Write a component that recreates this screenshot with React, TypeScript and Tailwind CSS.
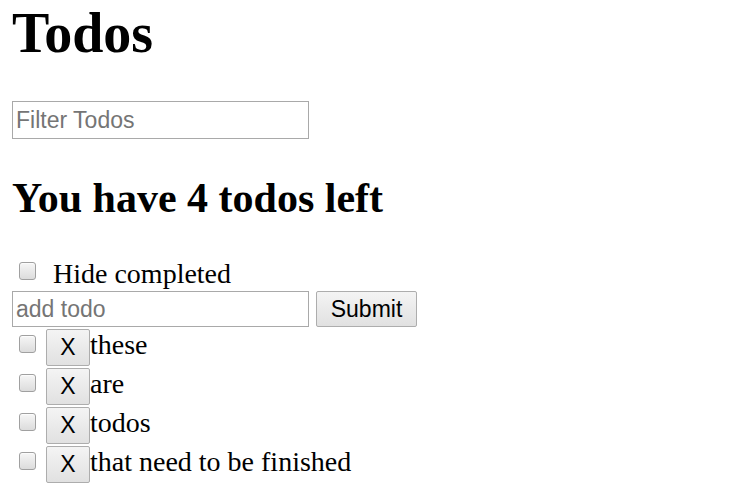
import { useState } from 'react';

type Todo = { id: number; text: string; done: boolean };

const serif = "font-['Liberation_Serif','Times_New_Roman',serif]";
const sans = "font-['Liberation_Sans',Arial,sans-serif]";

const checkboxCls =
    'appearance-none w-[17px] h-[18px] rounded-[3px] border border-[#a0a0a0] bg-gradient-to-b from-[#f6f6f6] to-[#dcdcdc] shadow-[inset_0_1px_1px_rgba(255,255,255,0.8)] m-0 shrink-0';

const buttonCls =
    `${sans} text-[23px] text-black border border-[#adadad] rounded-[2px] bg-gradient-to-b from-[#f4f4f4] to-[#e1e1e1] leading-none flex items-center justify-center`;

const inputCls =
    `${sans} text-[23px] text-black w-[297px] border border-[#a9a9a9] px-[3px] placeholder:text-[#757575] outline-none`;

const App = () => {
    const [todos, setTodos] = useState<Todo[]>([
        { id: 1, text: 'these', done: false },
        { id: 2, text: 'are', done: false },
        { id: 3, text: 'todos', done: false },
        { id: 4, text: 'that need to be finished', done: false },
    ]);
    const [hideCompleted, setHideCompleted] = useState(false);

    const left = todos.filter(t => !t.done).length;

    return (
        <div className={`min-h-screen bg-white text-black pl-[12px] ${serif}`}>
            {/* Title */}
            <h1 className="text-[56px] font-bold leading-[62px] pt-[2px]">Todos</h1>

            <input className={`${inputCls} h-[38px] mt-[37px] block`} placeholder="Filter Todos" />

            <h2 className="text-[42px] font-bold leading-[46px] mt-[36px]">
                You have {left} todos left
            </h2>

            {/* Hide completed */}
            <label className="flex items-start h-[31px] mt-[37px] text-[28px] leading-[31px]">
                <input
                    type="checkbox"
                    checked={hideCompleted}
                    onChange={() => setHideCompleted(!hideCompleted)}
                    className={`${checkboxCls} ml-[7px] mt-[4px]`}
                />
                <span className="ml-[17px]">Hide completed</span>
            </label>

            {/* Add todo */}
            <form className="flex items-start mt-[2px]" onSubmit={e => e.preventDefault()}>
                <input className={`${inputCls} h-[36px]`} placeholder="add todo" />
                <button type="submit" className={`${buttonCls} w-[101px] h-[36px] ml-[7px]`}>
                    Submit
                </button>
            </form>

            {/* Todo list */}
            <ul className="mt-[2px]">
                {todos
                    .filter(t => !(hideCompleted && t.done))
                    .map(todo => (
                        <li key={todo.id} className="flex items-start h-[39px] text-[28px] leading-[31px]">
                            <input
                                type="checkbox"
                                checked={todo.done}
                                onChange={() =>
                                    setTodos(prev => prev.map(t => (t.id === todo.id ? { ...t, done: !t.done } : t)))
                                }
                                className={`${checkboxCls} ml-[7px] mt-[6px]`}
                            />
                            <button
                                className={`${buttonCls} w-[44px] h-[37px] ml-[10px]`}
                                onClick={() => setTodos(prev => prev.filter(t => t.id !== todo.id))}
                            >
                                X
                            </button>
                            <span>{todo.text}</span>
                        </li>
                    ))}
            </ul>
        </div>
    );
};

export default App;
